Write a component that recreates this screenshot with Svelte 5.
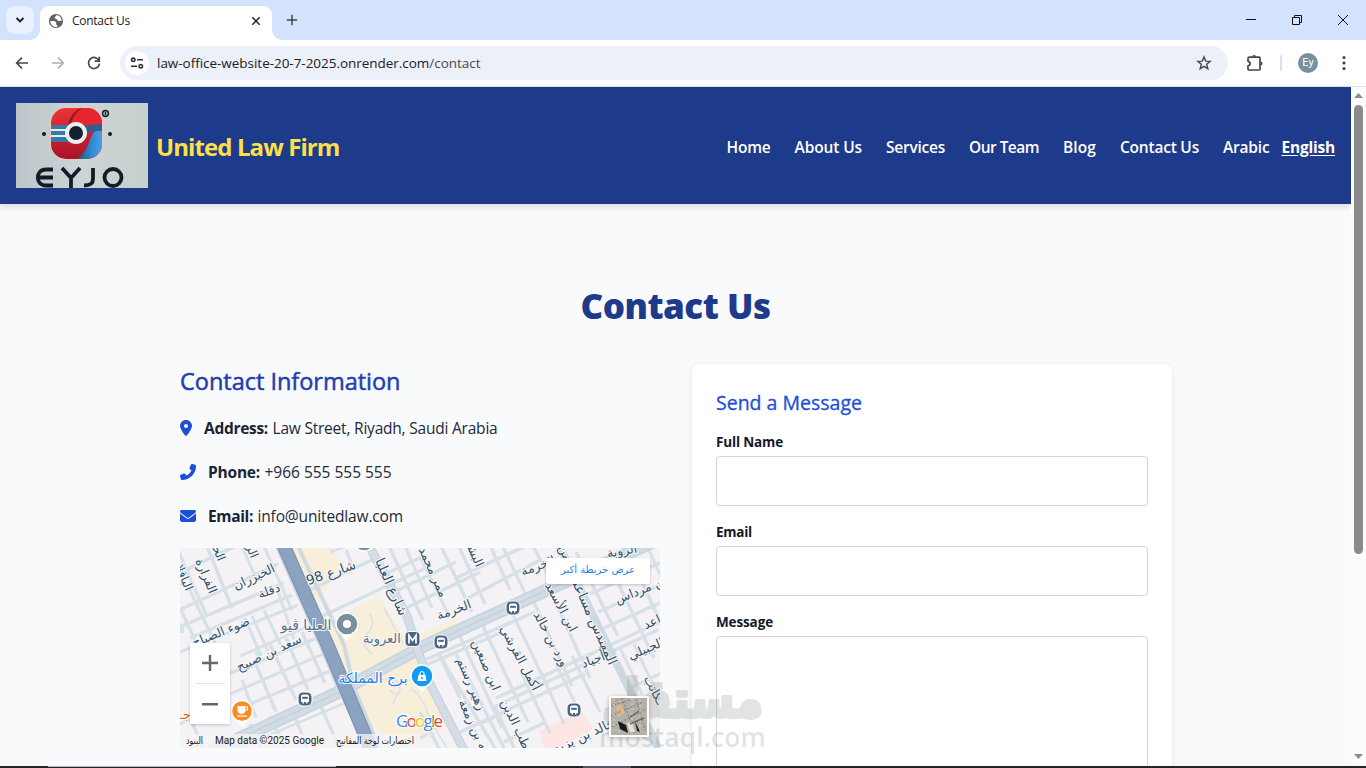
<script>
  // Spreads the letters of a label so that it fills a given width.
  function fit(node, width) {
    const natural = node.getBoundingClientRect().width;
    const count = node.textContent.length;
    node.style.letterSpacing = `${(width - natural) / count}px`;
  }

  const links = [
    ['Home', 44], ['About Us', 67.5], ['Services', 59], ['Our Team', 70],
    ['Blog', 33], ['Contact Us', 79]
  ];

  // Minor streets: x1, y1, x2, y2, width
  const streets = [
    [-5, 27, 62, -5, 4], [-5, 64, 98, 16, 4], [-5, 81, 104, 35, 4], [10, 90, 112, 47, 4],
    [-5, 106, 118, 57, 3.5], [60, 108, 136, 75, 3.5], [48, 126, 142, 88, 4],
    [50, 146, 150, 103, 3.5], [50, 164, 153, 122, 4], [0, 176, 40, 158, 3.5],
    [0, 60, 22, 107, 4], [7, 36, 42, 110, 4], [-4, -2, 26, 66, 4], [26, -4, 52, 60, 4],
    [61, -4, 76, 30, 3.5], [83, -4, 112, 62, 3.5],
    [65, 70, 80, 106, 3.5], [72, 68, 88, 103, 3.5], [84, 62, 102, 100, 3.5], [97, 40, 114, 91, 3.5],
    [90, 96, 116, 152, 4], [74, 112, 96, 164, 4], [106, 90, 128, 142, 4], [122, 84, 145, 135, 4],
    [62, 132, 76, 170, 3.5], [130, 42, 196, 10, 4], [138, 70, 250, 18, 4],
    [150, 4, 178, -5, 3], [166, 2, 174, 22, 3.5],
    [205, 26, 240, 10, 4], [214, 44, 276, 14, 4], [222, 62, 300, 24, 4],
    [208, -4, 243, 72, 4], [224, -4, 252, 60, 3.5], [240, 8, 268, 66, 3.5], [260, -4, 292, 64, 4],
    [278, -4, 305, 56, 4], [310, -3, 330, 42, 4], [322, -3, 346, 47, 3.5],
    [276, 30, 372, -14, 4], [288, 50, 360, 12, 4], [352, -4, 376, 42, 4],
    [245, 112, 355, 64, 4], [258, 104, 280, 150, 4], [278, 84, 322, 180, 4], [300, 72, 348, 174, 4],
    [330, 60, 368, 140, 3.5], [352, 50, 392, 138, 4], [370, 42, 410, 130, 4],
    [242, 119, 320, 85, 4], [312, 160, 478, 82, 4], [280, 184, 405, 126, 4], [350, 134, 480, 74, 4],
    [316, 150, 420, 102, 4], [260, 108, 316, 202, 4], [276, 106, 324, 200, 4], [314, 157, 336, 204, 4],
    [342, 126, 370, 185, 3.5], [360, 122, 384, 176, 3.5], [376, 116, 400, 165, 3.5], [392, 108, 420, 164, 3.5],
    [324, 194, 364, 175, 4], [300, 176, 330, 162, 3],
    [404, 30, 480, -6, 4], [410, 46, 482, 14, 4], [418, 64, 482, 36, 4], [424, 80, 482, 54, 4],
    [396, 4, 438, 88, 4], [430, 18, 474, 110, 4], [450, 8, 482, 78, 4], [468, 0, 486, 40, 3.5],
    [440, 100, 462, 146, 3.5], [454, 96, 480, 152, 3.5], [450, 140, 484, 124, 4],
    [240, 164, 262, 206, 4], [202, 208, 248, 186, 3],
    [10, 170, 26, 206, 4], [70, 176, 84, 206, 4], [90, 168, 108, 206, 4], [112, 162, 130, 206, 4],
    [138, 152, 162, 206, 4], [44, 206, 172, 152, 3]
  ];

  // Street names: text, centre x, centre y, rotation, size
  const names = [
    ['الخيزران', 74, 29, -25, 12.5], ['دقلة', 89, 43, -20, 12.5], ['شارع 98', 151, 25, -19, 13.5],
    ['الفرارة', 26, 28, 67, 12.5], ['الباقلاء', 3, 27, 67, 12], ['الحي', 37, 1, 67, 12], ['الر', 72, 3, 67, 12],
    ['ضوء الصباح', 41, 84, -22, 12.5], ['سعد بن صبيح', 89, 105, -25, 12.5], ['شارع العليا', 211, 39, 66, 13.5],
    ['ممر محمد', 253, 24, 66, 12.5], ['الخرمة', 274, 62, -20, 12.5], ['الخرمة', 358, 18, -20, 12.5],
    ['البشر', 294, 5, 66, 12.5], ['ابن الأسعد', 381, 59, 62, 12.5], ['ورد بن خالد', 371, 91, 62, 12.5],
    ['المهندس مساعد', 414, 74, 66, 13.5], ['بن مرداس', 461, 42, -22, 12.5], ['الروبة', 442, 3, -10, 12.5],
    ['الجبيلي', 466, 101, -23, 12.5], ['ساعد', 477, 72, -23, 12.5], ['ابن صنعين', 306, 117, 67, 12.5],
    ['أكمل القرشي', 340, 110, 62, 12.5], ['زهير رستم', 291, 136, 67, 12.5], ['أجياد', 413, 112, -20, 12.5],
    ['قطب الدين', 337, 179, 65, 12.5], ['عبدالله بن زمعة', 299, 190, 66, 12.5], ['خالد بن يزيد', 404, 188, -25, 13],
    ['ـكاتب', 474, 142, 62, 12.5], ['من', 385, 5, 66, 12]
  ];
  const stops = [[333, 60], [261, 94], [125, 151], [394, 162]];
</script>

<div class="window">
  <div class="tabs">
    <div class="chevron"><svg width="12" height="12" viewBox="0 0 12 12"><path d="m2.500 4 3.500 3.500L9.500 4" fill="none" stroke="#1f1f1f" stroke-width="1.900" /></svg></div>
    <div class="tab">
      <svg width="16" height="16" viewBox="0 0 16 16"><circle cx="8" cy="8" r="7.100" fill="#5f6368" /><path d="M2.300 8.200c2-.3 4.700-.1 5.600.8.8.9-.2 1.900.4 2.600.6.600 1.500.7.8 2.300-3.800.6-6.500-2-6.800-5.700ZM8.600 2c-.4 1.600-2.100 1.200-2 2.800 0 1.300 1.700.6 2.300 1.600.7 1 1.700 1.900 2.700 1.500.8-.3 1.300-.1 2.100.1C13.900 5 11.500 2.300 8.600 2Z" fill="#fff" /></svg>
      <span class="tabname"><span use:fit={58}>Contact Us</span></span>
      <svg class="close" width="10" height="10" viewBox="0 0 10 10"><path d="m1.300 1.300 7.400 7.400m0-7.400L1.300 8.700" stroke="#1f1f1f" stroke-width="1.500" /></svg>
    </div>
    <svg class="plus" width="12" height="12" viewBox="0 0 12 12"><path d="M6 .8v10.400M.8 6h10.400" stroke="#444746" stroke-width="1.500" /></svg>
    <div class="controls">
      <svg width="12" height="12" viewBox="0 0 12 12"><path d="M1 5.500h10" stroke="#111" /></svg>
      <svg width="12" height="12" viewBox="0 0 12 12"><path d="M1.500 3.500h7v7h-7zM3.500 3.500v-2h7v7h-2" fill="none" stroke="#111" /></svg>
      <svg width="12" height="12" viewBox="0 0 12 12"><path d="m1 1 10 10M11 1 1 11" stroke="#111" /></svg>
    </div>
  </div>

  <div class="toolbar">
    <svg width="16" height="16" viewBox="0 0 16 16"><path d="M14 8H2.800M8 2.600 2.600 8 8 13.400" fill="none" stroke="#444746" stroke-width="1.600" /></svg>
    <svg width="16" height="16" viewBox="0 0 16 16"><path d="M2 8h11.200M8 2.600 13.400 8 8 13.400" fill="none" stroke="#abb0ae" stroke-width="1.500" /></svg>
    <svg width="16" height="16" viewBox="0 0 16 16"><path d="M13 5.600A5.500 5.500 0 1 0 13.500 8.700" fill="none" stroke="#444746" stroke-width="1.700" /><path d="M13.200 1.800v4.400H8.800" fill="none" stroke="#444746" stroke-width="1.700" /></svg>
    <div class="omnibox">
      <div class="site"><svg width="16" height="16" viewBox="0 0 16 16"><g fill="none" stroke="#303134" stroke-width="1.600"><circle cx="4.200" cy="4.800" r="1.700" /><path d="M8 4.800h6M2 11.200h6" /><circle cx="11.800" cy="11.200" r="1.700" /></g></svg></div>
      <span class="url"><span use:fit={323.5}>law-office-website-20-7-2025.onrender.com<i>/contact</i></span></span>
      <svg width="16" height="16" viewBox="0 0 16 16"><path d="m8 1.900 1.700 4.200 4.500.3-3.500 2.900 1.100 4.400L8 11.300l-3.800 2.400 1.100-4.400-3.500-2.900 4.500-.3z" fill="none" stroke="#444746" stroke-width="1.400" /></svg>
    </div>
    <svg class="puzzle" width="18" height="18" viewBox="0 0 18 18"><path d="M3.500 3.200H13q1 0 1 1V15q0 1-1 1H3q-1 0-1-1v-3.200c2.800-.3 2.800-4.200 0-4.500V4.500q0-1.300 1.500-1.300z" fill="none" stroke="#444746" stroke-width="1.700" stroke-linejoin="round" /><path d="M6.200 2.800a1.900 1.900 0 0 1 3.800 0zM14.500 7.600a2 2 0 0 1 0 4z" fill="#444746" /></svg>
    <div class="sep"></div>
    <div class="avatar">Ey</div>
    <svg class="dots" width="4" height="16" viewBox="0 0 4 16"><g fill="#444746"><circle cx="2" cy="2.500" r="1.600" /><circle cx="2" cy="8" r="1.600" /><circle cx="2" cy="13.500" r="1.600" /></g></svg>
  </div>

  <div class="view">
    <div class="page">
      <header>
        <svg class="logo" width="132" height="85" viewBox="0 0 132 85">
          <defs>
            <linearGradient id="paper"><stop offset="0" stop-color="#bcc6c8" /><stop offset=".5" stop-color="#ccd5d4" /><stop offset="1" stop-color="#c7cfcd" /></linearGradient>
            <linearGradient id="sky" x1="0" x2="1"><stop offset="0" stop-color="#17496f" /><stop offset=".6" stop-color="#2f89d0" /><stop offset="1" stop-color="#4ba4e8" /></linearGradient>
            <linearGradient id="ruby" x1="0" x2="0" y1="0" y2="1"><stop offset="0" stop-color="#ec3434" /><stop offset="1" stop-color="#a8142a" /></linearGradient>
            <clipPath id="badge"><rect x="35" y="5" width="51" height="51" rx="15" /></clipPath>
          </defs>
          <rect width="132" height="85" fill="url(#paper)" />
          <rect x="34" y="4" width="53" height="53" rx="16" fill="#edc7bd" />
          <g clip-path="url(#badge)">
            <rect x="35" y="5" width="51" height="51" fill="url(#ruby)" />
            <path d="M58 57C76 50 70 30 87 21v36z" fill="url(#sky)" />
            <path d="M53 20C56 10 62 5 68 5h18v19c-8-4-20-2-32-4" fill="#e6252f" />
            <path d="M52 22C55 10 61 6 66 5c-4 3-9 7-11 17z" fill="#861d29" />
            <path d="M35 22h22v17H35z" fill="#3a78a8" /><path d="M35 27h20M35 33h20" stroke="#e3edf2" stroke-width="2.200" />
            <path d="M68 23c8-1 13-2 18-2v7c-7 0-13 0-16 3z" fill="#2a6291" />
          </g>
          <circle cx="60" cy="30" r="9" fill="#14212e" stroke="#edf0f0" stroke-width="4" />
          <circle cx="28" cy="31" r="2" fill="#101b26" /><circle cx="94" cy="31" r="2" fill="#101b26" />
          <circle cx="89.500" cy="10.500" r="3" fill="#9aa2a4" stroke="#101b26" stroke-width="1.300" /><path d="M89.500 9v3" stroke="#101b26" />
          <g fill="none" stroke="#111c28" stroke-width="3.800">
            <path d="M37 66.500h-7c-11 0-11 16 0 16h7M23 74.500h14M46 65l9 10 9-10M55 75v11M77 65v11c0 5-3 6.500-9 6.500" /><circle cx="97" cy="74.500" r="8.500" />
          </g>
        </svg>
        <div class="brand"><span use:fit={183.5}>United Law Firm</span></div>
        <nav>
          {#each links as [name, width]}<a href="#top"><span use:fit={width}>{name}</span></a>{/each}
          <div class="langs"><a href="#ar"><span use:fit={46.500}>Arabic</span></a><a href="#en" class="on"><span use:fit={53.500}>English</span></a></div>
        </nav>
      </header>

      <main>
        <h1><span use:fit={190}>Contact Us</span></h1>
        <div class="cols">
          <section>
            <h2><span use:fit={220.500}>Contact Information</span></h2>
            <p class="pin">
              <svg width="12" height="16" viewBox="0 0 384 512"><path fill="#1d4ed8" d="M215.700 499.200C267 435 384 279.400 384 192C384 86 298 0 192 0S0 86 0 192c0 87.400 117 243 168.300 307.200c12.300 15.300 35.100 15.300 47.400 0zM192 128a64 64 0 1 1 0 128 64 64 0 1 1 0-128z" /></svg>
              <b><span use:fit={64}>Address:</span></b><span use:fit={225}>Law Street, Riyadh, Saudi Arabia</span>
            </p>
            <p>
              <svg width="16" height="16" viewBox="0 0 512 512"><path fill="#1d4ed8" transform="translate(512 0) scale(-1 1)" d="M164.900 24.600c-7.700-18.600-28-28.500-47.400-23.200l-88 24C12.100 30.200 0 46 0 64c0 247.400 200.600 448 448 448c18 0 33.800-12.100 38.600-29.500l24-88c5.300-19.400-4.600-39.700-23.200-47.400l-96-40c-16.300-6.800-35.200-2.100-46.300 11.600L304.700 368C234.300 334.700 177.300 277.700 144 207.300L193.300 167c13.700-11.200 18.400-30 11.600-46.300l-40-96z" /></svg>
              <b><span use:fit={52}>Phone:</span></b><span use:fit={127}>+966 555 555 555</span>
            </p>
            <p>
              <svg width="16" height="16" viewBox="0 0 512 512"><path fill="#1d4ed8" d="M48 64C21.500 64 0 85.500 0 112c0 15.100 7.100 29.300 19.200 38.400L236.800 313.600c11.400 8.500 27 8.500 38.400 0L492.800 150.400c12.100-9.100 19.200-23.300 19.200-38.400c0-26.500-21.500-48-48-48H48zM0 176V384c0 35.300 28.700 64 64 64H448c35.300 0 64-28.700 64-64V176L294.400 339.200c-22.800 17.100-54 17.100-76.800 0L0 176z" /></svg>
              <b><span use:fit={45}>Email:</span></b><span use:fit={145.500}>info@unitedlaw.com</span>
            </p>

            <div class="map">
              <svg width="480" height="200" viewBox="0 0 480 200">
                <rect width="480" height="200" fill="#f4f2f4" />
                <path d="M111 0h41l14 22-14 7-12 25-8 1z M139 78l60-30 30 50-58 36-12-5z M240 86l35-15 9 14-38 18z M170 135l66-32 15 37 15 37-14 12-42 11-28-42z" fill="#f8efda" />
                <path d="m359 183 42-20 12 18-36 19h-12z" fill="#fce5e3" />
                <path d="m74 104 6-2 3 5-6 3zM0 78l4-1v8H0z" fill="#c9efd9" />
                {#each streets as [x1, y1, x2, y2, w]}
                  <line {x1} {y1} {x2} {y2} stroke="#d7e0e7" stroke-width={w * 0.85} />
                {/each}
                <g fill="none" stroke="#d9e1e8">
                  <path d="M172 140q5 10 3 18t8 12M190 66q6 11-3 20t5 20M202 132q18-5 18 10c0 8-8 3-10 0M218 144l-5 12M172 65l8 13-10 9M204 60l19 36M232 141q10 8 15 22t20 37" stroke-width="1.600" />
                </g>
                <g fill="none">
                  <path d="M30 204 155 146 240 100 367 42 486-12" stroke="#c6d2dd" stroke-width="13" />
                  <path d="M30 204 155 146 240 100 367 42 486-12" stroke="#d2dce5" stroke-width="10" />
                  <path d="M30 204 155 146 240 100 367 42 486-12" stroke="#bdcad8" stroke-width="1" />
                  <path d="m188-4 39 72 12 38 11 30 36 70" stroke="#c5d1dc" stroke-width="9" />
                  <path d="m188-4 39 72 12 38 11 30 36 70" stroke="#d4dde5" stroke-width="7" />
                  <path d="m378-4 103 210" stroke="#cdd8e0" stroke-width="8" />
                  <path d="M95-6 140 96l18 43 32 67M116-6l48 103 10 43 28 66" stroke="#cfd9e2" stroke-width="4" />
                  <path d="M103-4 148 98l44 106" stroke="#798fae" stroke-width="14" />
                  <path d="M103-4 148 98l44 106" stroke="#8ba2c1" stroke-width="12" />
                </g>
                <g class="street">
                  {#each names as [name, x, y, turn, size]}
                    <text transform="translate({x} {y}) rotate({turn})" font-size={size} dy="4">{name}</text>
                  {/each}
                </g>
                <g class="place">
                  <text x="126" y="82" font-size="14">العليا ڤيو</text>
                  <text x="202" y="95" font-size="13">العروبة</text>
                  <text x="193" y="135" font-size="14" fill="#1a82e2">برج المملكة</text>
                  <text x="5" y="171" font-size="13" fill="#d56e0c">جـ</text>
                </g>
                <path d="m160 85 7 8 7-8z" fill="#fff" /><circle cx="167" cy="76" r="11" fill="#78909c" stroke="#fff" stroke-width="1.500" /><circle cx="167" cy="76" r="4" fill="#fff" />
                <circle cx="184" cy="-8" r="11" fill="#78909c" stroke="#fff" stroke-width="1.500" />
                <rect x="225" y="83.500" width="15" height="15" rx="4" fill="#4a6580" stroke="#fff" />
                <path d="M229 95.500v-8l3.500 5 3.500-5v8" fill="none" stroke="#fff" stroke-width="1.700" />
                {#each stops as [x, y]}
                  <g transform="translate({x} {y})"><rect x="-7" y="-7" width="14" height="14" rx="5" fill="#4a6580" stroke="#fff" /><path d="M-4-2.500q0-2 2-2h4q2 0 2 2v5.500h-1.500v1.500H1V3h-2v1.500h-1.500V3H-4z" fill="#fff" /><path d="M-2.800-2.200h5.600v2h-5.600z" fill="#4a6580" /></g>
                {/each}
                <path d="m235 136 7 8 7-8z" fill="#fff" /><circle cx="242" cy="128" r="11" fill="#109cf5" stroke="#fff" stroke-width="1.500" /><path d="M238.500 127h7l1 6h-9z" fill="#fff" /><path d="M240 128v-3q2-3 4 0v3" fill="none" stroke="#fff" stroke-width="1.200" /><circle cx="242" cy="130" r="1" fill="#109cf5" />
                <path d="m54 171 8 8 8-8z" fill="#fff" /><circle cx="62" cy="163" r="10.500" fill="#fb8b24" stroke="#fff" stroke-width="1.500" /><path d="M57.500 158h8v5q-1 3-4 3t-4-3zM57 167.500h10v1.300H57z" fill="#fff" /><path d="M65.500 159h2v3h-2" fill="none" stroke="#fff" />
                <text class="google" x="216" y="179" textLength="47"><tspan fill="#4285f4">G</tspan><tspan fill="#ea4335">o</tspan><tspan fill="#fbbc05">o</tspan><tspan fill="#4285f4">g</tspan><tspan fill="#34a853">l</tspan><tspan fill="#ea4335">e</tspan></text>
                <rect y="186" width="240" height="14" fill="#f6f5f6" opacity=".76" />
                <g class="legal">
                  <text x="14.500" y="196" textLength="17" lengthAdjust="spacingAndGlyphs">البنود</text>
                  <text class="roboto" x="89.500" y="196" textLength="109">Map data ©2025 Google</text>
                  <text x="195" y="196" textLength="78" lengthAdjust="spacingAndGlyphs">اختصارات لوحة المفاتيح</text>
                </g>
              </svg>
              <svg class="satellite" width="40" height="41" viewBox="0 0 40 41">
                <rect width="40" height="41" rx="1.500" fill="#fff" /><rect x="2" y="2" width="36" height="37" fill="#b3b0a7" />
                <path d="M2 20 34 6M3 31 37 13M13 2l13 36M27 3l9 31M2 10l19-6" stroke="#88857d" stroke-width="1.200" stroke-dasharray="2 1.500" />
                <path d="M5 3v35M10 4v34M23 2v36M31 4v34" stroke="#cbc8bf" stroke-width="1.500" stroke-dasharray="2 3" />
                <path d="m6 11 6-3 4 9-6 3z" fill="#d9bd88" /><path d="m6 5 5-2M8 17l4-2" stroke="#d69382" stroke-width="2" />
                <path d="m9 25 8 4 2 8-8-4zM26 25l5 11-3-1z" fill="#181b1d" /><path d="m18 27 5-1 3 10h-5z" fill="#e5e2dc" /><path d="m21 21 9-6m-9 13 14-6" stroke="#6a675f" stroke-width="1.500" />
              </svg>
              <div class="bigger">عرض خريطة أكبر</div>
              <div class="zoom"><svg width="40" height="81" viewBox="0 0 40 81"><path d="M12 20h16M20 12v16M12 61.200h16" stroke="#666" stroke-width="2.400" /><path d="M5 40.500h30" stroke="#e6e6e6" /></svg></div>
            </div>
          </section>

          <form>
            <h3><span use:fit={146}>Send a Message</span></h3>
            <label for="name"><span use:fit={67}>Full Name</span></label><input id="name" />
            <label for="mail"><span use:fit={36}>Email</span></label><input id="mail" />
            <label for="text"><span use:fit={57}>Message</span></label><textarea id="text"></textarea>
          </form>
        </div>
      </main>
    </div>
    <div class="scroll">
      <svg width="9" height="5" viewBox="0 0 9 5"><path d="M4.500 0 9 5H0z" fill="#8b8b8b" /></svg>
      <div class="thumb"></div>
      <svg class="down" width="9" height="5" viewBox="0 0 9 5"><path d="M4.500 5 9 0H0z" fill="#8b8b8b" /></svg>
    </div>
  </div>
  <div class="taskbar"><i></i><b></b></div>
  <svg class="mark" width="176" height="90" viewBox="0 0 176 90">
    <g fill="#737b78">
      <text x="167" y="47" font-family="DejaVu Sans" font-weight="700" font-size="52" direction="rtl" textLength="161" lengthAdjust="spacingAndGlyphs" stroke="#737b78" stroke-width="4" stroke-linejoin="round">مستقل</text>
      <text x="3" y="77" font-family="Open Sans" font-weight="600" font-size="27" textLength="167" lengthAdjust="spacingAndGlyphs">mostaql.com</text>
    </g>
  </svg>
</div>

<style>
  :global(body) { margin: 0; overflow: hidden; }
  .window { position: relative; width: 1366px; height: 768px; display: flex; flex-direction: column; overflow: hidden; background: #fff; font-family: "Open Sans", sans-serif; color: #1f2937; }
  .window * { box-sizing: border-box; }
  svg { display: block; flex: none; }
  span { white-space: nowrap; }
  .tabs { height: 40px; flex: none; background: #d3e2fd; display: flex; align-items: center; padding-left: 6px; }
  .chevron { width: 28px; height: 28px; border-radius: 9px; background: #e9f0fe; display: flex; align-items: center; justify-content: center; }
  .tab { position: relative; width: 232px; height: 34px; align-self: flex-end; margin-left: 6px; background: #fff; border-radius: 9px 9px 0 0; display: flex; align-items: center; padding: 0 11px 5px 8px; }
  .tab::before, .tab::after { content: ""; position: absolute; bottom: 0; width: 10px; height: 10px; }
  .tab::before { left: -10px; background: radial-gradient(circle at 0 0, transparent 9.500px, #fff 10px); }
  .tab::after { right: -10px; background: radial-gradient(circle at 100% 0, transparent 9.500px, #fff 10px); }
  .tabname { margin-left: 8px; font-size: 12px; color: #202124; }
  .close { margin-left: auto; }
  .plus { margin-left: 14px; }
  .controls { margin-left: auto; display: flex; gap: 34px; padding-right: 17px; }
  .toolbar { height: 47px; flex: none; display: flex; align-items: center; padding-left: 14px; gap: 20px; border-bottom: 1px solid #dfe1e5; background: #fff; }
  .omnibox { width: 1108px; height: 34px; margin-left: -2px; border-radius: 17px; background: #ecf0f9; display: flex; align-items: center; padding: 0 16px 0 5px; }
  .site { width: 24px; height: 24px; border-radius: 50%; background: #fff; display: flex; align-items: center; justify-content: center; }
  .url { flex: 1; margin-left: 8px; font-size: 13.500px; color: #202124; }
  .url i { font-style: normal; color: #474a4d; }
  .puzzle { margin-left: -2px; }
  .sep { width: 2px; height: 16px; margin-left: -4px; background: #d3e2fd; }
  .avatar { width: 20px; height: 20px; margin-left: -4px; border-radius: 50%; background: #78909c; color: #fff; font: 11px/20px Roboto, sans-serif; text-align: center; }
  .dots { margin-left: 4px; }
  .view { flex: 1; min-height: 0; display: flex; }
  .page { width: 1351px; overflow: hidden; background: #f9fafc; }
  header { position: relative; height: 117px; background: #1e3a8a; display: flex; align-items: center; padding: 0 16px; box-shadow: 0 3px 6px rgba(0, 0, 0, .12); }
  .brand { margin: 1px 0 0 8px; font-size: 24px; font-weight: 700; color: #fde047; }
  nav { margin: 2px 0 0 auto; display: flex; gap: 24px; font-size: 15.500px; font-weight: 600; }
  a { color: #fff; text-decoration: none; }
  .langs { display: flex; gap: 12px; }
  .on { font-weight: 700; text-decoration: underline; text-underline-offset: 2px; }
  main { padding-top: 80px; }
  h1, h2, h3, p { margin: 0; }
  h1 { height: 80px; font-size: 35px; line-height: 44px; font-weight: 800; color: #1e3a8a; text-align: center; }
  .cols { display: grid; grid-template-columns: 480px 480px; gap: 32px; padding-left: 180px; }
  h2 { height: 36px; margin-bottom: 16px; font-size: 23.500px; line-height: 34px; font-weight: 500; color: #1e40af; -webkit-text-stroke: .5px #1e40af; }
  p { height: 24px; margin-bottom: 20px; display: flex; align-items: center; font-size: 15.500px; }
  p b { margin: 0 4.500px 0 12px; color: #1a2433; }
  .map { position: relative; height: 200px; overflow: hidden; }
  .street, .place { font-family: "DejaVu Sans", sans-serif; text-anchor: middle; paint-order: stroke; stroke: #f8f8fa; stroke-width: 2px; }
  .street { fill: #344f6b; }
  .place { fill: #5a7085; }
  .google { font: 500 17px "Open Sans", sans-serif; paint-order: stroke; stroke: #fff; stroke-width: 2px; }
  .legal { font: 10px "Liberation Sans", "DejaVu Sans", sans-serif; text-anchor: middle; fill: #202020; }
  .roboto { font-family: Roboto, sans-serif; }
  .satellite { position: absolute; left: 429px; top: 148px; z-index: 2; filter: drop-shadow(0 1px 2px #0004); }
  .bigger { position: absolute; left: 366px; top: 10px; width: 104px; height: 26px; background: #fff; border-radius: 2px; box-shadow: 0 1px 3px #0003; color: #1a82e2; font: 10px/24px "DejaVu Sans", sans-serif; text-align: center; white-space: nowrap; }
  .zoom { position: absolute; left: 10px; top: 95px; width: 40px; height: 81px; background: #fff; box-shadow: 0 1px 3px #0003; }
  form { height: 460px; padding: 24px; border-radius: 8px; background: #fff; box-shadow: 0 1px 5px rgba(0, 0, 0, .08); }
  h3 { height: 30px; margin-bottom: 14px; font-size: 19.500px; line-height: 30px; font-weight: 500; color: #1d4ed8; -webkit-text-stroke: .3px #1d4ed8; }
  label { display: block; height: 20px; margin-bottom: 4px; font-size: 13.500px; line-height: 20px; font-weight: 700; color: #111827; }
  input, textarea { display: block; width: 432px; height: 50px; margin: 0 0 16px; border: 1px solid #d1d5db; border-radius: 4px; background: #fff; resize: none; }
  textarea { height: 200px; }
  .scroll { width: 15px; background: #fcfcfc; display: flex; flex-direction: column; align-items: center; padding: 6px 0 7px; }
  .thumb { width: 9px; height: 449px; margin-top: 7px; border-radius: 5px; background: #8b8b8b; }
  .down { margin-top: auto; }
  .taskbar { height: 2px; flex: none; display: flex; background: #25242a; }
  .taskbar i { width: 288px; height: 1px; margin-left: 48px; background: #b9bfbf; }
  .taskbar b { width: 48px; height: 2px; margin-left: 247px; background: #555366; }
  .mark { position: absolute; left: 596px; top: 670px; opacity: .2; }
</style>
